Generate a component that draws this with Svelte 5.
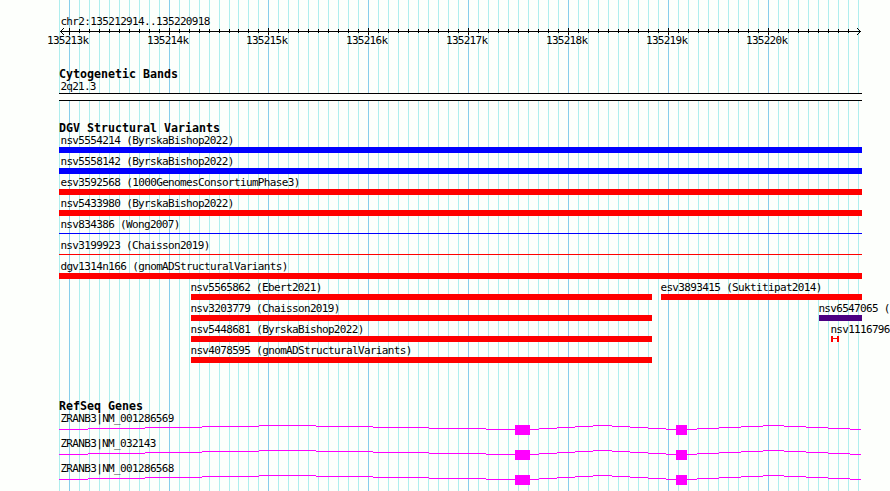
<script lang="ts">
	type Feature = { label: string; from: number; to: number; color: string; kind?: 'bar' | 'line' | 'span' };

	const LEFT = 59;
	const RIGHT = 862;

	const gridLines = Array.from({ length: 81 }, (_, n) => {
		const i = n - 1;
		return { x: Math.floor(69.165 + 9.99 * i), major: i % 10 === 0 };
	}).filter((l) => l.x < RIGHT);

	const kilobases = gridLines.filter((l) => l.major).map((l, i) => ({ x: l.x, label: `${135213 + i}k` }));

	const full = (label: string, color: string, kind: Feature['kind'] = 'bar'): Feature[] => [
		{ label, from: LEFT, to: RIGHT, color, kind }
	];
	const middle = (label: string): Feature => ({ label, from: 191, to: 652, color: '#ff0000' });

	const variantLanes: Feature[][] = [
		full('nsv5554214 (ByrskaBishop2022)', '#0000ff'),
		full('nsv5558142 (ByrskaBishop2022)', '#0000ff'),
		full('esv3592568 (1000GenomesConsortiumPhase3)', '#ff0000'),
		full('nsv5433980 (ByrskaBishop2022)', '#ff0000'),
		full('nsv834386 (Wong2007)', '#0000ff', 'line'),
		full('nsv3199923 (Chaisson2019)', '#ff0000', 'line'),
		full('dgv1314n166 (gnomADStructuralVariants)', '#ff0000'),
		[
			middle('nsv5565862 (Ebert2021)'),
			{ label: 'esv3893415 (Suktitipat2014)', from: 661, to: RIGHT, color: '#ff0000' }
		],
		[
			middle('nsv3203779 (Chaisson2019)'),
			{ label: 'nsv6547065 (', from: 819, to: RIGHT, color: '#4b0082' }
		],
		[
			middle('nsv5448681 (ByrskaBishop2022)'),
			{ label: 'nsv1116796', from: 831, to: 839, color: '#ff0000', kind: 'span' }
		],
		[middle('nsv4078595 (gnomADStructuralVariants)')]
	];

	const genes = ['ZRANB3|NM_001286569', 'ZRANB3|NM_032143', 'ZRANB3|NM_001286568'];

	// intron segments as [start x, row above the baseline]
	const introns = [
		[59, 0], [88, 1], [145, 2], [202, 3], [259, 4], [316, 3], [373, 2], [429, 1], [486, 0],
		[539, 1], [557, 2], [575, 3], [593, 4], [612, 3], [630, 2], [648, 1], [666, 0],
		[697, 1], [719, 2], [741, 3], [763, 4], [784, 3], [806, 2], [828, 1], [850, 0], [861, 0]
	];

	const labelX = (from: number) => (from === LEFT ? 60.4 : from - 0.6);
	// pins monospaced labels to a 6px cell
	const width = (s: string) => s.length * 6;
</script>

<main>
	<svg class="grid" width="890" height="491">
		{#each gridLines as line}
			<rect class:major={line.major} x={line.x} y="0" width="1" height="491" />
		{/each}
	</svg>

	<svg class="ruler" width="890" height="66">
		<text x="60.4" y="25" textLength={width('chr2:135212914..135220918')}>chr2:135212914..135220918</text>
		<rect x="60" y="31" width="801" height="1" />
		{#each gridLines.slice(1, -1) as tick}
			<rect x={tick.x} y={tick.major ? 28 : 29} width="1" height={tick.major ? 7 : 4} />
		{/each}
		<path d="M64 28 L60.5 31.5 L64 35 M857 28 L860.5 31.5 L857 35" />
		{#each kilobases as kb}
			<text x={kb.x - 22} y="44" textLength="42">{kb.label}</text>
		{/each}
	</svg>

	<section class="bands">
		<h2>Cytogenetic Bands</h2>
		<svg width="890" height="22">
			<text x="60.4" y="10" textLength="36">2q21.3</text>
			<rect class="band" x="59" y="13" width="803" height="8" />
			<rect x="59" y="13" width="803" height="1" />
			<rect x="59" y="20" width="803" height="1" />
		</svg>
	</section>

	<section class="variants">
		<h2>DGV Structural Variants</h2>
		{#each variantLanes as lane}
			<svg width="890" height="21">
				{#each lane as f}
					<text x={labelX(f.from)} y="10" textLength={width(f.label)}>{f.label}</text>
					{#if f.kind === 'line'}
						<rect x={f.from} y="15" width={f.to - f.from} height="1" fill={f.color} />
					{:else if f.kind === 'span'}
						<rect x={f.from} y="13" width="2" height="6" fill={f.color} />
						<rect x={f.from} y="15" width={f.to - f.from} height="1" fill={f.color} />
						<rect x={f.to - 2} y="13" width="2" height="6" fill={f.color} />
					{:else}
						<rect x={f.from} y="13" width={f.to - f.from} height="6" fill={f.color} />
					{/if}
				{/each}
			</svg>
		{/each}
	</section>

	<section class="genes">
		<h2>RefSeq Genes</h2>
		{#each genes as gene}
			<svg width="890" height="25">
				<text x="60.4" y="10" textLength={width(gene)}>{gene}</text>
				<g class="gene">
					{#each introns.slice(0, -1) as [x, up], i}
						<rect {x} y={17 - up} width={introns[i + 1][0] - x} height="1" />
					{/each}
					<rect x="515" y="13" width="15" height="10" />
					<rect x="676" y="13" width="11" height="10" />
				</g>
			</svg>
		{/each}
	</section>
</main>

<style>
	:global(body) {
		background: #fdfffc;
	}
	main {
		position: relative;
		width: 890px;
		height: 491px;
		overflow: hidden;
		color: #000;
	}
	svg {
		display: block;
		position: relative;
		shape-rendering: crispEdges;
	}
	.grid {
		position: absolute;
		top: 0;
		left: 0;
		fill: #afeeee;
	}
	.grid .major {
		fill: #87ceeb;
	}
	text {
		font-family: 'DejaVu Sans Mono', monospace;
		font-size: 11px;
		white-space: pre;
	}
	.ruler path {
		fill: none;
		stroke: #000;
	}
	h2 {
		position: relative;
		box-sizing: border-box;
		margin: 0;
		padding: 1px 0 0 59px;
		height: 14px;
		font: bold 11.63px/14px 'DejaVu Sans Mono', monospace;
		white-space: pre;
	}
	.bands {
		height: 54px;
	}
	.variants {
		height: 278px;
	}
	.band {
		fill: #fdfffc;
	}
	.gene {
		fill: #ff00ff;
	}
</style>
